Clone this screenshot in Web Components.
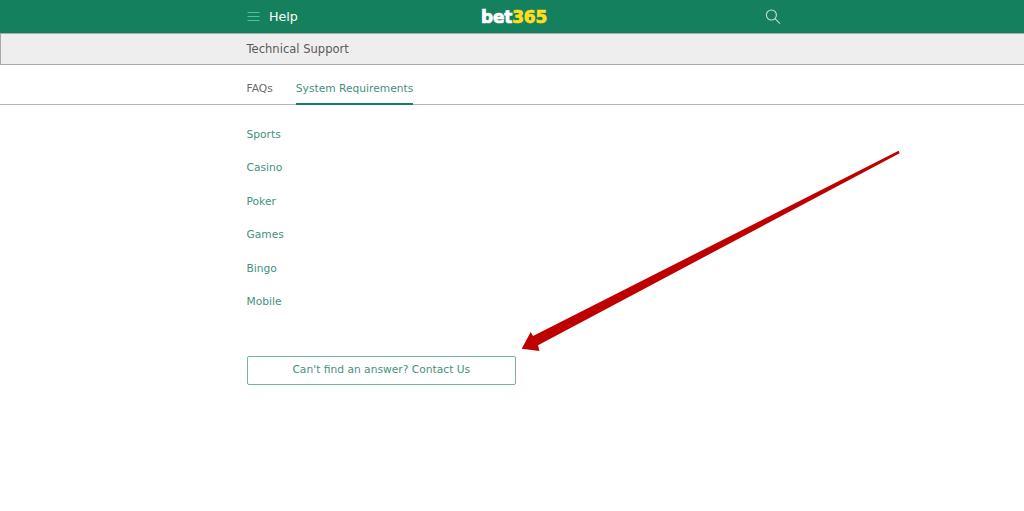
<!DOCTYPE html>
<html lang="en">
<head>
<meta charset="utf-8">
<title>Help - Technical Support</title>
<style>
  html, body { margin: 0; height: 100%; background: #fff; }
  body { font-family: "DejaVu Sans", Verdana, sans-serif; overflow: hidden; }
</style>
</head>
<body>
<help-page>
  <help-header></help-header>
  <sub-band>Technical Support</sub-band>
  <tab-bar></tab-bar>
  <topic-list>
    <topic-link>Sports</topic-link>
    <topic-link>Casino</topic-link>
    <topic-link>Poker</topic-link>
    <topic-link>Games</topic-link>
    <topic-link>Bingo</topic-link>
    <topic-link>Mobile</topic-link>
  </topic-list>
  <contact-button>Can't find an answer? Contact Us</contact-button>
  <red-arrow></red-arrow>
</help-page>

<script>
// shared left edge of the page content
const LEFT = '246.5px';

class HelpPage extends HTMLElement {
  constructor() {
    super();
    const shadow = this.attachShadow({ mode: 'open' });
    shadow.innerHTML = `
      <style>
        :host {
          display: flex;
          flex-direction: column;
          position: relative;
          height: 511px;
          --text-green: #45917f;
          --content-left: ${LEFT};
        }
      </style>
      <slot></slot>
    `;
  }
}

class HelpHeader extends HTMLElement {
  constructor() {
    super();
    const shadow = this.attachShadow({ mode: 'open' });
    shadow.innerHTML = `
      <style>
        :host {
          display: grid;
          grid-template-columns: 234.5px 66px 218px auto;
          align-items: center;
          box-sizing: border-box;
          height: 33px;
          padding-left: var(--content-left);
          background: #15805d;
          color: #fff;
        }
        .help { display: flex; align-items: center; gap: 9.5px; font-size: 12.7px; }
        svg { display: block; }
        .logo {
          font-family: "DejaVu Sans", sans-serif;
          font-weight: bold;
          font-size: 17px;
          letter-spacing: -0.2px;
          -webkit-text-stroke: 0.7px currentColor;
          white-space: nowrap;
          line-height: 32px;
          padding-top: 1px;
        }
        .logo b { color: #ffdf1b; font-weight: bold; }
      </style>
      <div class="help">
        <svg width="13" height="10" viewBox="0 0 13 10" fill="none" stroke="#4fc39c" stroke-width="1">
          <path d="M0.5 0.5H12.5M0.5 4.5H12.5M0.5 8.5H12.5"/>
        </svg>
        <span>Help</span>
      </div>
      <div class="logo">bet<b>365</b></div>
      <span></span>
      <svg width="16" height="16" viewBox="0 0 16 16" fill="none" stroke="#c4e0d6" stroke-width="1.1">
        <circle cx="6.4" cy="6" r="5"/>
        <path d="M10 9.6L15 14.6"/>
      </svg>
    `;
  }
}

class SubBand extends HTMLElement {
  constructor() {
    super();
    const shadow = this.attachShadow({ mode: 'open' });
    shadow.innerHTML = `
      <style>
        :host {
          display: flex;
          align-items: center;
          box-sizing: border-box;
          height: 32px;
          padding-left: calc(var(--content-left) - 1px);
          background: #eeeeee;
          border: 1px solid #a9a9a9;
          border-right: 0;
          color: #5a5a5a;
          font-size: 11.55px;
        }
      </style>
      <slot></slot>
    `;
  }
}

class TabBar extends HTMLElement {
  constructor() {
    super();
    const shadow = this.attachShadow({ mode: 'open' });
    shadow.innerHTML = `
      <style>
        :host {
          display: flex;
          gap: 23px;
          box-sizing: border-box;
          height: 40px;
          padding-left: var(--content-left);
          border-bottom: 1px solid #b4b4b4;
          font-size: 10.7px;
        }
        .tab { display: flex; align-items: center; color: #6b6b6b; padding-top: 8px; height: 31px; }
        .tab.on {
          color: var(--text-green);
          box-shadow: inset 0 -2px 0 #15805d;
          height: 40px;
          box-sizing: border-box;
          padding-top: 7px;
        }
      </style>
      <div class="tab">FAQs</div>
      <div class="tab on">System Requirements</div>
    `;
  }
}

class TopicList extends HTMLElement {
  constructor() {
    super();
    const shadow = this.attachShadow({ mode: 'open' });
    shadow.innerHTML = `
      <style>
        :host {
          display: flex;
          flex-direction: column;
          align-items: flex-start;
          gap: 20px;
          padding: 22.6px 0 0 var(--content-left);
        }
      </style>
      <slot></slot>
    `;
  }
}

class TopicLink extends HTMLElement {
  constructor() {
    super();
    const shadow = this.attachShadow({ mode: 'open' });
    shadow.innerHTML = `
      <style>
        :host {
          display: block;
          height: 13.5px;
          line-height: 13.5px;
          font-size: 10.7px;
          color: var(--text-green);
        }
      </style>
      <slot></slot>
    `;
  }
}

class ContactButton extends HTMLElement {
  constructor() {
    super();
    const shadow = this.attachShadow({ mode: 'open' });
    shadow.innerHTML = `
      <style>
        :host {
          display: flex;
          align-items: center;
          justify-content: center;
          box-sizing: border-box;
          width: 269.6px;
          height: 29px;
          margin: 47.4px 0 0 246.5px;
          padding-bottom: 2px;
          border: 1px solid #6fb5a0;
          border-radius: 2px;
          font-size: 10.7px;
          color: var(--text-green);
        }
      </style>
      <slot></slot>
    `;
  }
}

// annotation drawn over the page, so it sits on its own canvas
class RedArrow extends HTMLElement {
  constructor() {
    super();
    const shadow = this.attachShadow({ mode: 'open' });
    shadow.innerHTML = `
      <style>
        :host { position: absolute; left: 0; top: 0; width: 1024px; height: 511px; pointer-events: none; }
        svg { display: block; }
      </style>
      <svg width="1024" height="511" viewBox="0 0 1024 511">
        <polygon fill="#bf0000" points="899.6,153.2 898.6,150.8 533,336 530.7,332 521.7,348.7 539.5,351 538,345.2"/>
      </svg>
    `;
  }
}

customElements.define('help-page', HelpPage);
customElements.define('help-header', HelpHeader);
customElements.define('sub-band', SubBand);
customElements.define('tab-bar', TabBar);
customElements.define('topic-list', TopicList);
customElements.define('topic-link', TopicLink);
customElements.define('contact-button', ContactButton);
customElements.define('red-arrow', RedArrow);
</script>
</body>
</html>
